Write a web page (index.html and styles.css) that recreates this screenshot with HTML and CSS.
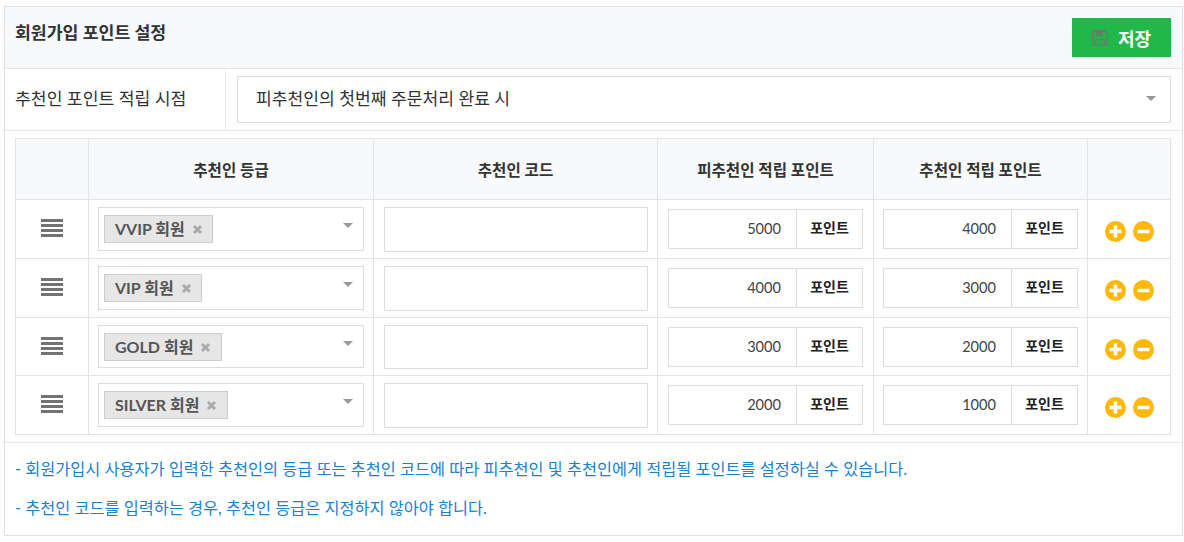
FILE: index.html
```html
<!DOCTYPE html>
<html lang="ko">
<head>
<meta charset="utf-8">
<title>회원가입 포인트 설정</title>
<link rel="stylesheet" href="styles.css">
</head>
<body>
<section class="panel">
  <header class="panel-head">
    <h2 class="panel-title">회원가입 포인트 설정</h2>
    <button class="save-btn" type="button">
      <svg class="save-icon" viewBox="0 0 16 16" width="16" height="16"><path d="M.75 .75h11.500l3 3v11.500h-14.500z" fill="none" stroke="#5f7f69" stroke-width="1.500"/><path d="M4 1h7v5h-7z" fill="#5f7f69"/><path d="M3.500 15v-5.500h9v5.500" fill="none" stroke="#5f7f69" stroke-width="1.500"/></svg>
      <span>저장</span>
    </button>
  </header>
  <div class="timing-row">
    <div class="timing-label">추천인 포인트 적립 시점</div>
    <div class="timing-field">
      <div class="select-box">피추천인의 첫번째 주문처리 완료 시<i class="caret"></i></div>
    </div>
  </div>
  <div class="table-wrap">
    <table class="grade-table">
      <colgroup><col class="c-drag"><col class="c-grade"><col class="c-code"><col class="c-p1"><col class="c-p2"><col class="c-act"></colgroup>
      <thead>
        <tr><th></th><th>추천인 등급</th><th>추천인 코드</th><th>피추천인 적립 포인트</th><th>추천인 적립 포인트</th><th></th></tr>
      </thead>
      <tbody>
        <tr>
          <td class="drag"><span class="bars"><i></i><i></i><i></i><i></i></span></td>
          <td><div class="tag-select"><span class="tag"><span class="tag-text">VVIP 회원</span><svg class="x" viewBox="0 0 11 11" width="11" height="11"><path d="M2 2L9 9M9 2L2 9"/></svg></span><i class="caret"></i></div></td>
          <td class="wide"><div class="code-input"></div></td>
          <td class="wide"><div class="group"><span class="num">5000</span><span class="unit">포인트</span></div></td>
          <td><div class="group"><span class="num">4000</span><span class="unit">포인트</span></div></td>
          <td class="acts"><svg class="round" viewBox="0 0 21 21" width="21" height="21"><circle cx="10.500" cy="10.500" r="10.500"/><path d="M4.500 10.500h12M10.500 4.500v12"/></svg><svg class="round" viewBox="0 0 21 21" width="21" height="21"><circle cx="10.500" cy="10.500" r="10.500"/><path d="M4.500 10.500h12"/></svg></td>
        </tr>
        <tr>
          <td class="drag"><span class="bars"><i></i><i></i><i></i><i></i></span></td>
          <td><div class="tag-select"><span class="tag"><span class="tag-text">VIP 회원</span><svg class="x" viewBox="0 0 11 11" width="11" height="11"><path d="M2 2L9 9M9 2L2 9"/></svg></span><i class="caret"></i></div></td>
          <td class="wide"><div class="code-input"></div></td>
          <td class="wide"><div class="group"><span class="num">4000</span><span class="unit">포인트</span></div></td>
          <td><div class="group"><span class="num">3000</span><span class="unit">포인트</span></div></td>
          <td class="acts"><svg class="round" viewBox="0 0 21 21" width="21" height="21"><circle cx="10.500" cy="10.500" r="10.500"/><path d="M4.500 10.500h12M10.500 4.500v12"/></svg><svg class="round" viewBox="0 0 21 21" width="21" height="21"><circle cx="10.500" cy="10.500" r="10.500"/><path d="M4.500 10.500h12"/></svg></td>
        </tr>
        <tr>
          <td class="drag"><span class="bars"><i></i><i></i><i></i><i></i></span></td>
          <td><div class="tag-select"><span class="tag"><span class="tag-text">GOLD 회원</span><svg class="x" viewBox="0 0 11 11" width="11" height="11"><path d="M2 2L9 9M9 2L2 9"/></svg></span><i class="caret"></i></div></td>
          <td class="wide"><div class="code-input"></div></td>
          <td class="wide"><div class="group"><span class="num">3000</span><span class="unit">포인트</span></div></td>
          <td><div class="group"><span class="num">2000</span><span class="unit">포인트</span></div></td>
          <td class="acts"><svg class="round" viewBox="0 0 21 21" width="21" height="21"><circle cx="10.500" cy="10.500" r="10.500"/><path d="M4.500 10.500h12M10.500 4.500v12"/></svg><svg class="round" viewBox="0 0 21 21" width="21" height="21"><circle cx="10.500" cy="10.500" r="10.500"/><path d="M4.500 10.500h12"/></svg></td>
        </tr>
        <tr>
          <td class="drag"><span class="bars"><i></i><i></i><i></i><i></i></span></td>
          <td><div class="tag-select"><span class="tag"><span class="tag-text">SILVER 회원</span><svg class="x" viewBox="0 0 11 11" width="11" height="11"><path d="M2 2L9 9M9 2L2 9"/></svg></span><i class="caret"></i></div></td>
          <td class="wide"><div class="code-input"></div></td>
          <td class="wide"><div class="group"><span class="num">2000</span><span class="unit">포인트</span></div></td>
          <td><div class="group"><span class="num">1000</span><span class="unit">포인트</span></div></td>
          <td class="acts"><svg class="round" viewBox="0 0 21 21" width="21" height="21"><circle cx="10.500" cy="10.500" r="10.500"/><path d="M4.500 10.500h12M10.500 4.500v12"/></svg><svg class="round" viewBox="0 0 21 21" width="21" height="21"><circle cx="10.500" cy="10.500" r="10.500"/><path d="M4.500 10.500h12"/></svg></td>
        </tr>
      </tbody>
    </table>
  </div>
  <div class="notes">
    <p>- 회원가입시 사용자가 입력한 추천인의 등급 또는 추천인 코드에 따라 피추천인 및 추천인에게 적립될 포인트를 설정하실 수 있습니다.</p>
    <p>- 추천인 코드를 입력하는 경우, 추천인 등급은 지정하지 않아야 합니다.</p>
  </div>
</section>
</body>
</html>
```
FILE: styles.css
```css
* { box-sizing: border-box; }
html, body { margin: 0; padding: 0; background: #fff; }
body {
  padding: 6px 0 0 4px;
  font-family: Lato, "Noto Sans CJK KR", sans-serif;
  font-size: 15px;
  color: #333;
}
.panel { width: 1179px; height: 530px; border: 1px solid #e0e0e2; }
.panel-head {
  display: flex; justify-content: space-between; align-items: flex-start;
  height: 62px; padding: 11px 11px 0 10px;
  background: #f8f9fb; border-bottom: 1px solid #e4e5e7;
}
.panel-title { margin: 3px 0 0; font-size: 17.250px; font-weight: 700; line-height: 23px; color: #333; }
.save-btn {
  display: flex; align-items: center; justify-content: center; gap: 10px;
  width: 99px; height: 39px; border: 0; background: #20b84a; color: #fff;
  font: 700 18px Lato, "Noto Sans CJK KR", sans-serif; padding: 0;
}
.timing-row { display: flex; height: 62px; border-bottom: 1px solid #e8e8ea; }
.timing-label { width: 221px; padding: 18px 0 0 10px; line-height: 23px; font-size: 17.200px; border-right: 1px solid #e8e8ea; }
.timing-field { flex: 1; padding: 7px 11px 0; }
.select-box {
  position: relative; height: 47px; padding-left: 18px; line-height: 43px; font-size: 17.150px;
  border: 1px solid #dcdcdc; color: #333;
}
.caret {
  position: absolute; width: 0; height: 0;
  border-left: 5px solid transparent; border-right: 5px solid transparent; border-top: 5px solid #999;
}
.select-box .caret { right: 14px; top: 19px; }
.table-wrap { padding: 7px 11px 7px 10px; border-bottom: 1px solid #e8e8ea; }
.grade-table { width: 1155px; border-collapse: collapse; table-layout: fixed; }
.c-drag { width: 73px; } .c-grade { width: 285px; } .c-code { width: 284px; }
.c-p1 { width: 216px; } .c-p2 { width: 214px; } .c-act { width: 83px; }
.grade-table th, .grade-table td { border: 1px solid #e2e3e5; }
.grade-table th { height: 61px; padding: 0 9px; background: #f8f9fb; font-size: 15.600px; font-weight: 700; color: #333; }
.grade-table td { height: 58.750px; padding: 7px 9px 6px; vertical-align: top; }
.grade-table td.wide { padding-left: 10px; }
.grade-table td.wide + td.wide { padding-right: 10px; }
.drag { text-align: center; }
.bars { display: inline-flex; flex-direction: column; gap: 2px; width: 22px; margin-top: 11px; }
.bars i { display: block; height: 3px; background: #737373; }
.tag-select { position: relative; height: 43.750px; border: 1px solid #dcdcdc; padding: 7px 0 0 5px; }
.tag-select .caret { right: 10px; top: 15px; }
.tag {
  display: inline-flex; align-items: center; height: 28px; padding: 0 9.500px 0 10px;
  background: #e6e6e6; border: 1px solid #ccc; font-size: 16px; font-weight: 700; color: #555;
}
.tag-text { margin-top: -2px; }
.x { margin: 1px 0 0 7px; fill: none; stroke: #aaa; stroke-width: 3; }
.code-input { height: 44.750px; border: 1px solid #dcdcdc; background: #fff; }
.group { display: flex; height: 40px; margin-top: 2px; border: 1px solid #dcdcdc; }
.num { flex: 1; text-align: right; padding-right: 15px; line-height: 38px; font-size: 14.600px; border-right: 1px solid #dcdcdc; color: #444; }
.unit { width: 65px; text-align: center; line-height: 36px; font-size: 14px; font-weight: 700; color: #222; }
.grade-table td.acts { padding: 21px 0 0 17px; }
.round { margin-right: 7px; }
.round circle { fill: #fdb90b; }
.round path { fill: none; stroke: #fff; stroke-width: 3.500; }
.notes { padding: 14px 11px 0 10px; color: #1a82cf; font-size: 16.340px; }
.notes p { margin: 0 0 16px; line-height: 23px; }
```
